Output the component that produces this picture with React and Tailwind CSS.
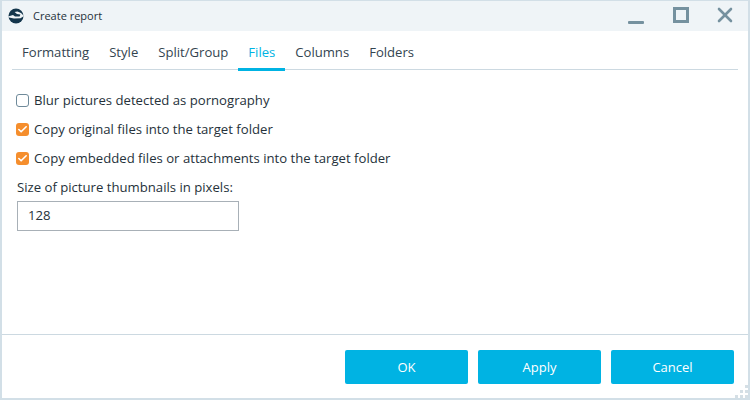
import { Check, X } from "lucide-react";

const font = "font-['Open_Sans','Noto_Sans',sans-serif]";

const tabs = ["Formatting", "Style", "Split/Group", "Files", "Columns", "Folders"];

const options = [
  { label: "Blur pictures detected as pornography", checked: false },
  { label: "Copy original files into the target folder", checked: true },
  { label: "Copy embedded files or attachments into the target folder", checked: true },
];

const Logo = () => (
  <svg width="16" height="16" viewBox="0 0 16 16">
    <circle cx="8" cy="8" r="7.5" fill="#14364c" />
    <path d="M0 8.4 L5 7 L7 8.6 L11.6 8.4 L12.4 6.4 L9 6 L6.6 4 L9.5 3.4 L13 5 L16 8 L12.5 10.2 L6 10.6 L1 9.6 Z" fill="#eff4f7" />
  </svg>
);

const Option = ({ label, checked }) => (
  <div className="flex items-center h-[29px] gap-[5px]">
    {checked ? (
      <span className="w-[13px] h-[13px] rounded-[3px] bg-[#f58e2d] flex items-center justify-center">
        <Check size={11} strokeWidth={3.5} className="text-white" />
      </span>
    ) : (
      <span className="w-[13px] h-[13px] rounded-[3px] border border-[#6f8a9a] bg-white" />
    )}
    <span className="text-[13.15px] text-[#25313a]">{label}</span>
  </div>
);

const Footer = ({ label }) => (
  <button className="w-[123px] h-[34px] pt-[2px] rounded-[2px] bg-[#00b3e3] text-white text-[13px]">{label}</button>
);

const App = () => {
  return (
    <div className={`${font} w-[750px] h-[400px] bg-white border-2 border-[#d2dfe7] border-t-[1px] flex flex-col overflow-hidden relative`}>
      {/* Title bar */}
      <div className="h-[30px] bg-[#eff4f7] flex items-center pl-[6px] shrink-0">
        <Logo />
        <span className="ml-[9px] text-[11px] text-[#25313a]">Create report</span>
        <div className="ml-auto flex items-center text-[#75919f]">
          <span className="w-[16px] h-[3px] rounded-[1px] bg-[#75919f] mt-[12px] mr-[29px]" />
          <span className="w-[16px] h-[16px] border-[3px] border-[#75919f] mb-[2px] mr-[24px]" />
          <X size={24} strokeWidth={2.6} className="mb-[2px] mr-[11px]" />
        </div>
      </div>

      {/* Tabs */}
      <div className="mx-[10px] mt-[3px] h-[36px] flex border-b border-[#ccd9e1] shrink-0">
        {tabs.map((t) => (
          <div
            key={t}
            className={`h-[37px] px-[10px] pt-[4px] flex items-center text-[13.1px] border-b-[3px] ${
              t === "Files" ? "text-[#00b3e3] border-[#00b3e3]" : "text-[#33444f] border-transparent"
            }`}
          >
            {t}
          </div>
        ))}
      </div>

      {/* Body */}
      <div className="flex-1 pl-[14px] pt-[16px]">
        {options.map((o) => (
          <Option key={o.label} label={o.label} checked={o.checked} />
        ))}
        <div className="ml-[1px] text-[13.15px] text-[#25313a] mt-[5px]">Size of picture thumbnails in pixels:</div>
        <div className="mt-[3px] ml-[1px] w-[222px] h-[30px] pt-[1px] border border-[#a8b0b7] flex items-center pl-[10px] text-[13.15px] text-[#25313a]">
          128
        </div>
      </div>

      {/* Footer */}
      <div className="h-[64px] border-t border-[#ccd9e1] flex justify-end gap-[10px] pt-[15px] pr-[14px] shrink-0">
        <Footer label="OK" />
        <Footer label="Apply" />
        <Footer label="Cancel" />
      </div>

      {/* Resize grip */}
      <div className="absolute right-0 bottom-0 grid grid-cols-3 gap-[2px] w-[13px]">
        <span />
        <span />
        <span className="w-[3px] h-[3px] bg-[#d5dfe5]" />
        <span />
        <span className="w-[3px] h-[3px] bg-[#d5dfe5]" />
        <span className="w-[3px] h-[3px] bg-[#d5dfe5]" />
        <span className="w-[3px] h-[3px] bg-[#d5dfe5]" />
        <span className="w-[3px] h-[3px] bg-[#d5dfe5]" />
        <span className="w-[3px] h-[3px] bg-[#d5dfe5]" />
      </div>
    </div>
  );
};

export default App;
